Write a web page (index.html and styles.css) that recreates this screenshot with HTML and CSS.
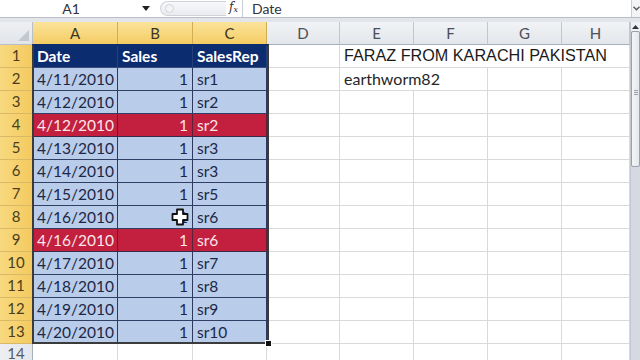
FILE: index.html
```html
<!DOCTYPE html>
<html>
<head>
<meta charset="utf-8">
<link rel="stylesheet" href="styles.css">
</head>
<body>
<div class="app">
  <div class="fbar">
    <div class="namebox">A1</div>
    <div class="nb-arrow"><svg width="8" height="5" viewBox="0 0 8 5"><path d="M0 0h8L4 5z" fill="#222"/></svg></div>
    <div class="pill"><span class="pill-dot"></span></div>
    <div class="fx">f<sub>x</sub></div>
    <div class="formula">Date</div>
    <div class="expand"><svg width="7" height="5" viewBox="0 0 7 5"><path d="M0.5 0.8L3.5 3.8L6.5 0.8" fill="none" stroke="#555" stroke-width="1.3"/></svg></div>
  </div>
  <div class="band"></div>
  <div class="main">
    <div class="sheet">
      <div class="grid">
        <div class="corner"><span class="tri"></span></div>
        <div class="ch sel">A</div><div class="ch sel">B</div><div class="ch sel">C</div>
        <div class="ch">D</div><div class="ch">E</div><div class="ch">F</div><div class="ch">G</div><div class="ch last">H</div>

        <div class="rh sel">1</div>
        <div class="c hd">Date</div><div class="c hd">Sales</div><div class="c hd">SalesRep</div>
        <div class="c"></div><div class="c big span4">FARAZ FROM KARACHI PAKISTAN</div>

        <div class="rh sel">2</div>
        <div class="c b">4/11/2010</div><div class="c b num">1</div><div class="c b">sr1</div>
        <div class="c"></div><div class="c txt span2">earthworm82</div><div class="c"></div><div class="c last"></div>

        <div class="rh sel">3</div>
        <div class="c b">4/12/2010</div><div class="c b num">1</div><div class="c b">sr2</div>
        <div class="c"></div><div class="c"></div><div class="c"></div><div class="c"></div><div class="c last"></div>

        <div class="rh sel">4</div>
        <div class="c r">4/12/2010</div><div class="c r num">1</div><div class="c r">sr2</div>
        <div class="c"></div><div class="c"></div><div class="c"></div><div class="c"></div><div class="c last"></div>

        <div class="rh sel">5</div>
        <div class="c b">4/13/2010</div><div class="c b num">1</div><div class="c b">sr3</div>
        <div class="c"></div><div class="c"></div><div class="c"></div><div class="c"></div><div class="c last"></div>

        <div class="rh sel">6</div>
        <div class="c b">4/14/2010</div><div class="c b num">1</div><div class="c b">sr3</div>
        <div class="c"></div><div class="c"></div><div class="c"></div><div class="c"></div><div class="c last"></div>

        <div class="rh sel">7</div>
        <div class="c b">4/15/2010</div><div class="c b num">1</div><div class="c b">sr5</div>
        <div class="c"></div><div class="c"></div><div class="c"></div><div class="c"></div><div class="c last"></div>

        <div class="rh sel">8</div>
        <div class="c b">4/16/2010</div><div class="c b num">1</div><div class="c b">sr6</div>
        <div class="c"></div><div class="c"></div><div class="c"></div><div class="c"></div><div class="c last"></div>

        <div class="rh sel">9</div>
        <div class="c r">4/16/2010</div><div class="c r num">1</div><div class="c r">sr6</div>
        <div class="c"></div><div class="c"></div><div class="c"></div><div class="c"></div><div class="c last"></div>

        <div class="rh sel">10</div>
        <div class="c b">4/17/2010</div><div class="c b num">1</div><div class="c b">sr7</div>
        <div class="c"></div><div class="c"></div><div class="c"></div><div class="c"></div><div class="c last"></div>

        <div class="rh sel">11</div>
        <div class="c b">4/18/2010</div><div class="c b num">1</div><div class="c b">sr8</div>
        <div class="c"></div><div class="c"></div><div class="c"></div><div class="c"></div><div class="c last"></div>

        <div class="rh sel">12</div>
        <div class="c b">4/19/2010</div><div class="c b num">1</div><div class="c b">sr9</div>
        <div class="c"></div><div class="c"></div><div class="c"></div><div class="c"></div><div class="c last"></div>

        <div class="rh sel">13</div>
        <div class="c b">4/20/2010</div><div class="c b num">1</div><div class="c b">sr10</div>
        <div class="c"></div><div class="c"></div><div class="c"></div><div class="c"></div><div class="c last"></div>

        <div class="rh r14">14</div>
        <div class="c"></div><div class="c"></div><div class="c"></div>
        <div class="c"></div><div class="c"></div><div class="c"></div><div class="c"></div><div class="c last"></div>
      </div>
      <div class="selection"><span class="handle"></span></div>
      <svg class="cursor" width="18" height="18" viewBox="0 0 18 18"><path d="M6 1.5h6v4.5h4.5v6H12v4.5H6V12H1.5V6H6z" fill="#fff" stroke="#111" stroke-width="1.8" stroke-linejoin="round"/></svg>
    </div>
    <div class="vscroll">
      <div class="vs-up"><svg width="7" height="4" viewBox="0 0 7 4"><path d="M0 4L3.5 0L7 4z" fill="#333"/></svg></div>
      <div class="vs-thumb"><span class="grip"></span></div>
      <div class="vs-track"></div>
    </div>
  </div>
</div>
</body>
</html>
```
FILE: styles.css
```css
html, body {
  margin: 0;
  padding: 0;
  width: 640px;
  height: 360px;
  overflow: hidden;
  background: #fff;
  font-family: Lato, "Noto Sans", sans-serif;
}
.app {
  width: 640px;
  height: 360px;
  display: flex;
  flex-direction: column;
}
.fbar {
  height: 17px;
  flex: none;
  display: flex;
  align-items: center;
  background: #fff;
  border-bottom: 1px solid #b9bec7;
  position: relative;
}
.namebox {
  width: 142px;
  text-align: center;
  font-size: 14px;
  color: #333;
  line-height: 17px;
}
.nb-arrow {
  width: 14px;
  display: flex;
  align-items: center;
}
.pill {
  margin-left: 4px;
  width: 66px;
  height: 15px;
  border: 1px solid #cfd3d9;
  border-right: none;
  border-radius: 8px 0 0 8px;
  background: linear-gradient(#f7f8fa, #e9ebef);
  box-sizing: border-box;
  position: relative;
}
.pill-dot {
  position: absolute;
  left: 4px;
  top: 2px;
  width: 7px;
  height: 7px;
  border-radius: 50%;
  border: 1px solid #d0d3d8;
  background: #f3f4f6;
}
.fx {
  width: 12px;
  font-family: "DejaVu Serif", "Liberation Serif", serif;
  font-style: italic;
  font-size: 12px;
  color: #333;
  line-height: 17px;
  padding-left: 3px;
  margin-right: 1px;
}
.fx sub {
  font-size: 8px;
  vertical-align: -1px;
}
.formula {
  flex: 1;
  height: 17px;
  border-left: 1px solid #c9cdd4;
  padding-left: 9px;
  font-size: 14px;
  color: #333;
  line-height: 17px;
}
.expand {
  width: 8px;
  height: 17px;
  border-left: 1px solid #c9cdd4;
  display: flex;
  align-items: center;
  justify-content: center;
  background: #f3f4f6;
}
.band {
  height: 4px;
  flex: none;
  background: #e2e5ea;
}
.main {
  flex: 1;
  display: flex;
  overflow: hidden;
}
.sheet {
  position: relative;
  width: 630px;
  flex: none;
  overflow: hidden;
}
.grid {
  display: grid;
  grid-template-columns: 33px 85px 75px 74px 73px 74px 74px 74px 68px;
  grid-auto-rows: 23px;
}
.grid > div {
  box-sizing: border-box;
  border-right: 1px solid #d9d9d9;
  border-bottom: 1px solid #d9d9d9;
  white-space: nowrap;
  overflow: hidden;
}
.corner {
  background: linear-gradient(#eef0f3, #e1e4e9);
  position: relative;
  border-right-color: #b9bec7 !important;
  border-bottom-color: #b9bec7 !important;
}
.tri {
  position: absolute;
  right: 3px;
  bottom: 3px;
  width: 0;
  height: 0;
  border-left: 11px solid transparent;
  border-bottom: 11px solid #c3c8cf;
}
.ch {
  background: linear-gradient(#f1f3f6, #e3e6eb);
  color: #4b4f57;
  font-size: 15px;
  text-align: center;
  line-height: 22px;
  border-right-color: #c2c7cf !important;
  border-bottom-color: #aab0ba !important;
}
.ch.sel {
  background: linear-gradient(#fbe39a, #f5cc64);
  color: #3d3520;
  border-right-color: #d1ad55 !important;
  border-bottom-color: #c8912e !important;
}
.rh {
  background: linear-gradient(90deg, #eceef2, #e4e7ec);
  color: #555b63;
  font-size: 15px;
  text-align: center;
  line-height: 21px;
  border-right-color: #aab0ba !important;
  border-bottom-color: #c8ccd3 !important;
}
.rh.r14 {
  line-height: 18px;
}
.rh.sel {
  background: linear-gradient(90deg, #f8d97f, #f4ca5f);
  color: #4a3e1c;
  border-right-color: #c8912e !important;
  border-bottom-color: #d9b866 !important;
}
.c {
  font-size: 15.5px;
  line-height: 22px;
  padding: 0 4px;
  color: #222;
}
.c.hd {
  background: #0c2c70;
  color: #fff;
  font-weight: 700;
  border-right-color: #24407a !important;
  border-bottom-color: #3a4c78 !important;
}
.c.b {
  background: #b9cce9;
  color: #1b2746;
  border-right-color: #2b3a5e !important;
  border-bottom-color: #2f3f66 !important;
}
.c.r {
  background: #c2203e;
  color: #fbe6ea;
  border-right-color: #5e2036 !important;
  border-bottom-color: #3a2a4a !important;
}
.c.num {
  text-align: right;
}
.c.big {
  font-family: "Liberation Sans", Arial, sans-serif;
  font-size: 16.2px;
  color: #1a1a1a;
  padding-left: 4px;
  line-height: 21px;
}
.span4 {
  grid-column: span 4;
}
.span2 {
  grid-column: span 2;
}
.c.txt {
  color: #262626;
  font-size: 16px;
}
.last {
  border-right-color: #d9d9d9;
}
.selection {
  position: absolute;
  left: 32px;
  top: 22px;
  width: 237px;
  height: 300px;
  border: 2px solid #3b3b3b;
  border-top-color: #0c2c70;
  box-sizing: border-box;
  pointer-events: none;
}
.handle {
  position: absolute;
  right: -5px;
  bottom: -5px;
  width: 5px;
  height: 5px;
  background: #111;
  border: 1px solid #fff;
}
.cursor {
  position: absolute;
  left: 171px;
  top: 186px;
}
.vscroll {
  flex: 1;
  display: flex;
  flex-direction: column;
  background: #d5d9e2;
  border-left: 1px solid #c3c8d0;
}
.vs-up {
  height: 9px;
  display: flex;
  align-items: center;
  justify-content: center;
  background: #eef0f3;
}
.vs-thumb {
  height: 136px;
  background: linear-gradient(90deg, #f4f5f7, #e4e7ec);
  border: 1px solid #9aa1ac;
  border-radius: 2px;
  box-sizing: border-box;
  position: relative;
}
.grip {
  position: absolute;
  left: 2px;
  right: 1px;
  top: 58px;
  height: 5px;
  background: repeating-linear-gradient(#9aa1ac 0 1px, transparent 1px 2px);
}
.vs-track {
  flex: 1;
}
```
